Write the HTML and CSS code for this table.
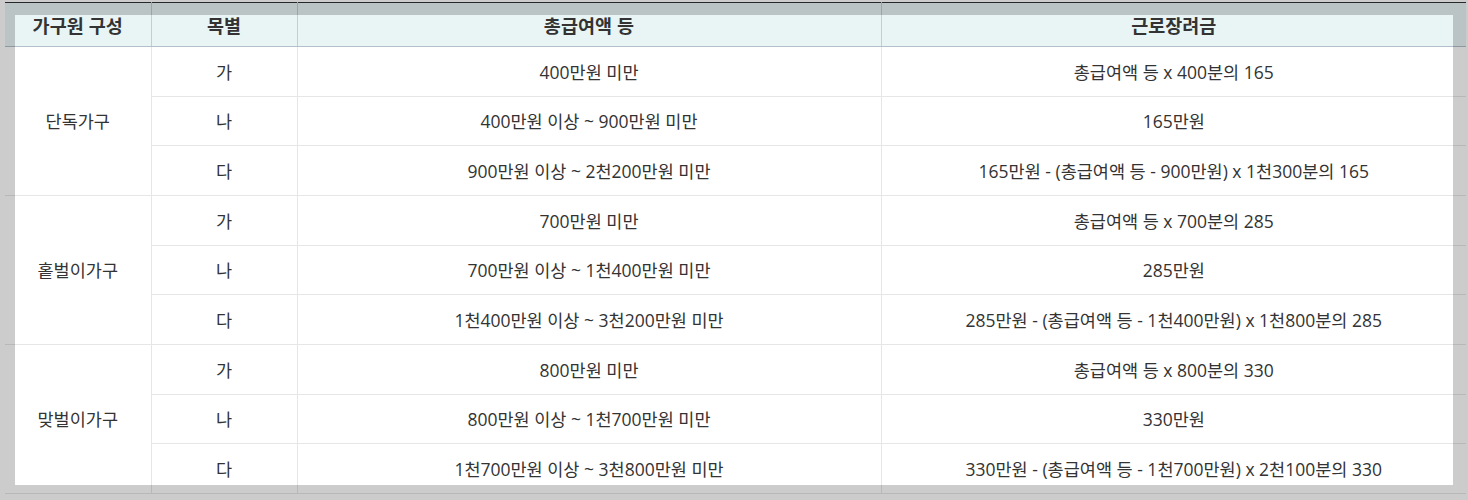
FILE: index.html
```html
<!DOCTYPE html>
<html lang="ko">
<head>
<meta charset="utf-8">
<link rel="stylesheet" href="styles.css">
</head>
<body>
<div class="wrap">
  <table class="tbl">
    <colgroup>
      <col class="c1"><col class="c2"><col class="c3"><col class="c4">
    </colgroup>
    <thead>
      <tr><th>가구원 구성</th><th>목별</th><th>총급여액 등</th><th>근로장려금</th></tr>
    </thead>
    <tbody>
      <tr><td rowspan="3" class="grp">단독가구</td><td>가</td><td>400만원 미만</td><td>총급여액 등 x 400분의 165</td></tr>
      <tr><td>나</td><td>400만원 이상 ~ 900만원 미만</td><td>165만원</td></tr>
      <tr><td>다</td><td>900만원 이상 ~ 2천200만원 미만</td><td>165만원 - (총급여액 등 - 900만원) x 1천300분의 165</td></tr>
      <tr><td rowspan="3" class="grp">홑벌이가구</td><td>가</td><td>700만원 미만</td><td>총급여액 등 x 700분의 285</td></tr>
      <tr><td>나</td><td>700만원 이상 ~ 1천400만원 미만</td><td>285만원</td></tr>
      <tr><td>다</td><td>1천400만원 이상 ~ 3천200만원 미만</td><td>285만원 - (총급여액 등 - 1천400만원) x 1천800분의 285</td></tr>
      <tr><td rowspan="3" class="grp">맞벌이가구</td><td>가</td><td>800만원 미만</td><td>총급여액 등 x 800분의 330</td></tr>
      <tr><td>나</td><td>800만원 이상 ~ 1천700만원 미만</td><td>330만원</td></tr>
      <tr><td>다</td><td>1천700만원 이상 ~ 3천800만원 미만</td><td>330만원 - (총급여액 등 - 1천700만원) x 2천100분의 330</td></tr>
    </tbody>
  </table>
  <div class="spotlight"></div>
</div>
</body>
</html>
```

FILE: styles.css
```css
html, body {
  margin: 0;
  padding: 0;
  background: #ffffff;
  overflow: hidden;
}
body {
  font-family: "Open Sans", "Noto Sans CJK KR", sans-serif;
  color: #333333;
}
.wrap {
  padding: 2px 2px 0 5px;
  height: 500px;
  box-sizing: border-box;
}
.tbl {
  width: 1461px;
  border-collapse: collapse;
  table-layout: fixed;
  border-top: 1px solid #333333;
}
.c1, .c2 { width: 146px; }
.c3 { width: 584px; }
.c4 { width: 585px; }
.tbl th {
  height: 43px;
  padding: 0;
  background: #e9f5f5;
  font-family: "Noto Sans CJK KR", sans-serif;
  font-size: 18.5px;
  font-weight: 700;
  color: #333333;
  text-align: center;
  vertical-align: middle;
  border-left: 1px solid #c3ced2;
  border-bottom: 1px solid #b3bfca;
}
.tbl th:first-child { border-left: none; }
.tbl td {
  height: 48.67px;
  padding: 0;
  font-size: 17.5px;
  text-align: center;
  vertical-align: middle;
  border-left: 1px solid #e6e6e6;
  border-bottom: 1px solid #e6e6e6;
}
.tbl td.grp { border-left: none; }
.spotlight {
  position: absolute;
  left: 15px;
  top: 15px;
  width: 1438px;
  height: 470px;
  box-shadow: 0 0 0 3000px rgba(0, 0, 0, 0.2);
  pointer-events: none;
}
```
